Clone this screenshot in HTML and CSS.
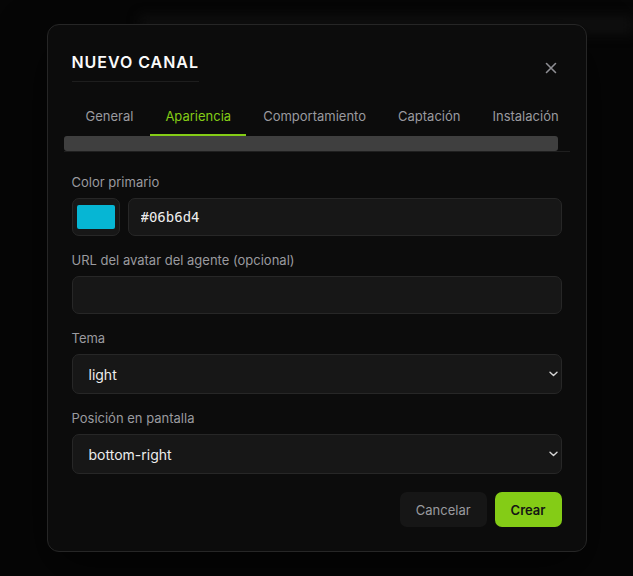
FILE: index.html
```html
<!DOCTYPE html>
<html lang="es">
<head>
  <meta charset="UTF-8">
  <meta name="viewport" content="width=device-width, initial-scale=1.0">
  <title>Nuevo canal</title>
  <link rel="stylesheet" href="styles.css">
</head>
<body>
  <div class="backdrop-glow"></div>

  <div class="modal">
    <div class="modal-header">
      <h2 class="modal-title">Nuevo canal</h2>
      <button class="close-btn" aria-label="Cerrar">
        <svg width="12" height="12" viewBox="0 0 12 12" fill="none" stroke="currentColor" stroke-width="1.6" stroke-linecap="round">
          <path d="M1.5 1.5l9 9M10.5 1.5l-9 9"/>
        </svg>
      </button>
    </div>

    <div class="tabs-wrap">
      <div class="tabs">
        <button class="tab">General</button>
        <button class="tab active">Apariencia</button>
        <button class="tab">Comportamiento</button>
        <button class="tab">Captación</button>
        <button class="tab">Instalación</button>
      </div>
      <div class="scroll-track"><div class="scroll-thumb"></div></div>
    </div>

    <form class="form">
      <div class="field">
        <label>Color primario</label>
        <div class="color-row">
          <div class="swatch-box"><div class="swatch"></div></div>
          <input class="input mono" type="text" value="#06b6d4">
        </div>
      </div>

      <div class="field">
        <label>URL del avatar del agente (opcional)</label>
        <input class="input" type="text">
      </div>

      <div class="field">
        <label>Tema</label>
        <div class="select-wrap">
          <select class="select">
            <option>light</option>
            <option>dark</option>
          </select>
          <svg class="chevron" width="9" height="6" viewBox="0 0 9 6" fill="none" stroke="currentColor" stroke-width="1.4" stroke-linecap="round" stroke-linejoin="round"><path d="M1 1.2l3.5 3.4L8 1.2"/></svg>
        </div>
      </div>

      <div class="field">
        <label>Posición en pantalla</label>
        <div class="select-wrap">
          <select class="select">
            <option>bottom-right</option>
            <option>bottom-left</option>
          </select>
          <svg class="chevron" width="9" height="6" viewBox="0 0 9 6" fill="none" stroke="currentColor" stroke-width="1.4" stroke-linecap="round" stroke-linejoin="round"><path d="M1 1.2l3.5 3.4L8 1.2"/></svg>
        </div>
      </div>

      <div class="actions">
        <button type="button" class="btn btn-ghost">Cancelar</button>
        <button type="button" class="btn btn-primary">Crear</button>
      </div>
    </form>
  </div>
</body>
</html>
```

FILE: styles.css
```css
:root {
    --page: #060606;
    --modal: #0c0c0c;
    --field: #171717;
    --border: #272727;
    --muted: #9a9a9f;
    --text: #ededed;
    --accent: #84cc16;
}

* {
    box-sizing: border-box;
}

body {
    margin: 0;
    min-height: 100vh;
    display: flex;
    justify-content: center;
    align-items: center;
    background: var(--page);
    font-family: 'Inter', 'Noto Sans', sans-serif;
    color: var(--text);
    overflow: hidden;
    position: relative;
}

/* faint blurred page content behind the overlay */
.backdrop-glow {
    position: absolute;
    top: 16px;
    left: 140px;
    right: 0;
    height: 18px;
    background: #101010;
    filter: blur(6px);
}

.modal {
    position: relative;
    width: 540px;
    padding: 24px;
    background: var(--modal);
    border: 1px solid #262626;
    border-radius: 12px;
    box-shadow: 0 20px 50px rgba(0, 0, 0, 0.6);
}

.modal-header {
    display: flex;
    justify-content: space-between;
    align-items: flex-end;
}

.modal-title {
    margin: 0;
    padding: 3px 0 9px;
    font-size: 16px;
    line-height: 20px;
    font-weight: 600;
    letter-spacing: 0.06em;
    text-transform: uppercase;
    color: #fafafa;
    border-bottom: 1px solid #1e1e1e;
}

.close-btn {
    background: none;
    border: none;
    padding: 0;
    margin: 0 5px 8px 0;
    color: #8e8e93;
    display: flex;
    cursor: pointer;
}

.tabs-wrap {
    margin: 16px -8px 0 -8px;
    border-bottom: 1px solid #1f1f1f;
}

.tabs {
    display: flex;
    gap: 2px;
    padding-left: 7px;
    white-space: nowrap;
}

.tab {
    background: none;
    border: none;
    border-bottom: 2px solid transparent;
    padding: 8px 15px;
    font-family: inherit;
    font-size: 13px;
    line-height: 20px;
    color: var(--muted);
    cursor: pointer;
}

.tab.active {
    color: var(--accent);
    border-bottom-color: var(--accent);
}

.scroll-track {
    height: 15px;
    padding-right: 12px;
}

.scroll-thumb {
    height: 15px;
    background: #3f3f3f;
    border-radius: 3px;
}

.form {
    display: flex;
    flex-direction: column;
    gap: 14px;
    padding-top: 20px;
}

.field {
    display: flex;
    flex-direction: column;
    gap: 6px;
}

.field label {
    font-size: 13px;
    line-height: 20px;
    color: var(--muted);
}

.color-row {
    display: flex;
    gap: 8px;
}

.swatch-box {
    width: 48px;
    height: 38px;
    padding: 6px 4px;
    background: var(--field);
    border: 1px solid var(--border);
    border-radius: 7px;
}

.swatch {
    width: 100%;
    height: 100%;
    background: #06b6d4;
    border-radius: 2px;
}

.input,
.select {
    width: 100%;
    height: 38px;
    padding: 0 12px;
    background: var(--field);
    border: 1px solid var(--border);
    border-radius: 7px;
    font-family: inherit;
    font-size: 14px;
    color: var(--text);
    outline: none;
}

.input.mono {
    flex: 1;
    font-family: 'DejaVu Sans Mono', 'Liberation Mono', monospace;
    font-size: 14px;
}

.select-wrap {
    position: relative;
}

.select {
    height: 40px;
    padding: 0 16px;
    font-size: 14px;
    appearance: none;
    -webkit-appearance: none;
}

.chevron {
    position: absolute;
    right: 4px;
    top: 17px;
    color: #d4d4d4;
    pointer-events: none;
}

.actions {
    display: flex;
    justify-content: flex-end;
    gap: 8px;
    margin-top: 4px;
}

.btn {
    height: 35px;
    padding: 0 16px;
    border: none;
    border-radius: 7px;
    font-family: inherit;
    font-size: 13px;
    cursor: pointer;
}

.btn-ghost {
    background: #161616;
    color: var(--muted);
}

.btn-primary {
    background: var(--accent);
    color: #141414;
    font-weight: 600;
}
```
